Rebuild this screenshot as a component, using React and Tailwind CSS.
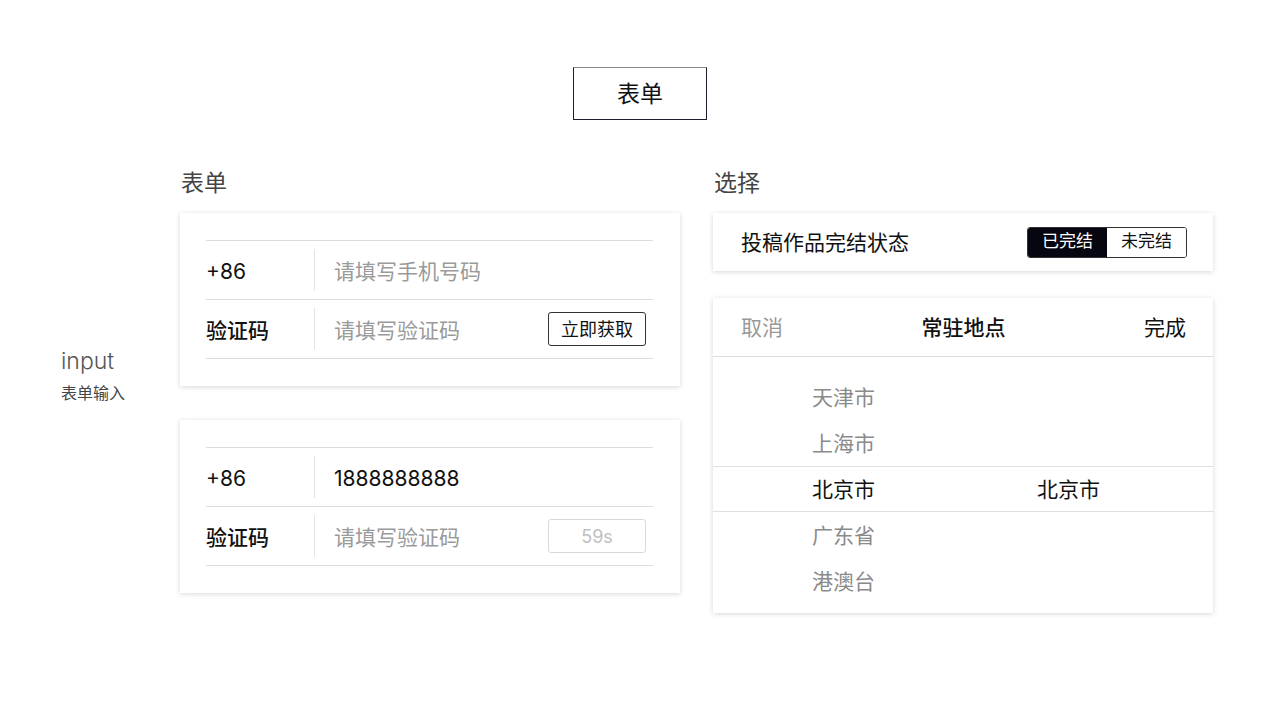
import React from "react";

const font = { fontFamily: '"Inter", "Noto Sans CJK SC", sans-serif' };

function Card({ className = "", children }) {
  return (
    <div className={"bg-white shadow-[0_1px_5px_rgba(0,0,0,0.16)] " + className}>
      {children}
    </div>
  );
}

function Row({ label, bold, children, right }) {
  return (
    <div className="flex items-center h-[59px] border-b border-[#dcdcdc]">
      <div className={"w-[108px] pt-[3px] text-[21px] text-[#111] " + (bold ? "font-medium" : "")}>{label}</div>
      <div className="w-px h-[42px] bg-[#e3e3e3]" />
      <div className="flex-1 pl-[19px] pt-[3px] text-[21px]">{children}</div>
      {right}
    </div>
  );
}

function FormCard({ phone, btn }) {
  return (
    <Card className="px-[26px] pr-[27px] py-[27px]">
      <div className="border-t border-[#dcdcdc]">
        <Row label="+86">
          {phone ? (
            <span className="text-[#111]">{phone}</span>
          ) : (
            <span className="text-[#9a9a9a]">请填写手机号码</span>
          )}
        </Row>
        <Row label="验证码" bold right={btn}>
          <span className="text-[#9a9a9a]">请填写验证码</span>
        </Row>
      </div>
    </Card>
  );
}

export default function App() {
  const items = ["天津市", "上海市", "北京市", "广东省", "港澳台"];
  return (
    <div className="w-[1280px] h-[720px] bg-white overflow-hidden" style={font}>
      <div className="pt-[67px] flex justify-center">
        <div className="w-[134px] h-[53px] pt-[2px] border border-[#1d1d2b] border-t-[#8a8a8a] flex items-center justify-center text-[23px] text-[#111]">
          表单
        </div>
      </div>
      <div className="flex pl-[61px] pt-[48px]">
        <div className="w-[119px] pt-[178px]">
          <div className="text-[23px] leading-[30px] font-light text-[#555]">input</div>
          <div className="text-[16px] leading-[20px] mt-[7px] text-[#444]">表单输入</div>
        </div>
        <div className="w-[500px]">
          <div className="h-[30px] leading-[30px] text-[23px] text-[#444] pl-px mb-[15px]">表单</div>
          <FormCard
            btn={
              <div className="mr-[7px] w-[98px] h-[34px] border border-[#333] rounded-[3px] flex items-center justify-center text-[18px] text-[#111]">
                立即获取
              </div>
            }
          />
          <div className="h-[34px]" />
          <FormCard
            phone="1888888888"
            btn={
              <div className="mr-[7px] w-[98px] h-[34px] border border-[#d9d9d9] rounded-[3px] flex items-center justify-center text-[18px] text-[#c0c0c0]">
                59s
              </div>
            }
          />
        </div>
        <div className="w-[33px]" />
        <div className="w-[500px]">
          <div className="h-[30px] leading-[30px] text-[23px] text-[#444] pl-px mb-[15px]">选择</div>
          <Card className="h-[58px] flex items-center justify-between pl-[28px] pr-[26px]">
            <span className="text-[21px] pt-[2px] text-[#111]">投稿作品完结状态</span>
            <div className="flex h-[31px] border border-[#333] rounded-[3px] overflow-hidden text-[17px]">
              <div className="w-[79px] bg-[#05060f] text-white flex items-center justify-center">已完结</div>
              <div className="w-[79px] bg-white text-[#111] flex items-center justify-center">未完结</div>
            </div>
          </Card>
          <div className="h-[27px]" />
          <Card className="pb-[9px]">
            <div className="h-[59px] pt-[2px] grid grid-cols-3 items-center px-[28px] pr-[27px] border-b border-[#dcdcdc] text-[21px]">
              <span className="text-[#999]">取消</span>
              <span className="text-center font-medium text-[#111]">常驻地点</span>
              <span className="text-right text-[#111]">完成</span>
            </div>
            <div className="pt-[17px]">
              {items.map((t, i) => (
                <div
                  key={t}
                  className={
                    "flex items-center h-[46px] pt-[2px] text-[21px] " +
                    (i === 2 ? "border-y border-[#e0e0e0] text-[#111]" : "text-[#8a8a8a]")
                  }
                >
                  <div className="w-[324px] pl-[99px]">{t}</div>
                  {i === 2 && <div>北京市</div>}
                </div>
              ))}
            </div>
          </Card>
        </div>
      </div>
    </div>
  );
}
